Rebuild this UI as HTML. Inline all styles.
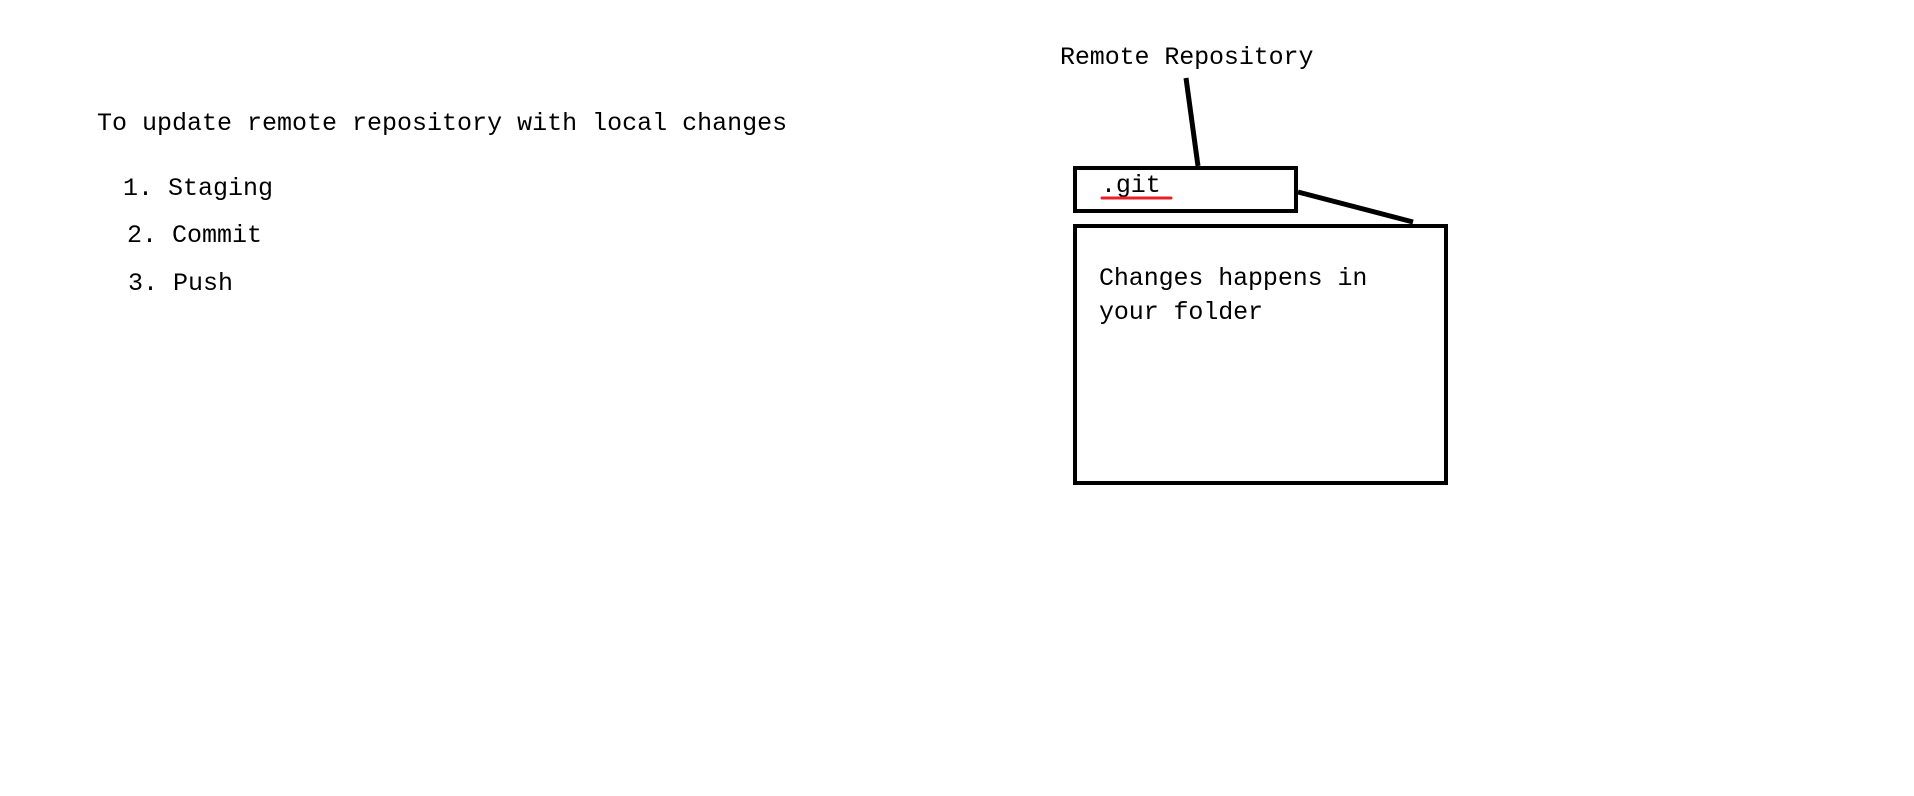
<!DOCTYPE html>
<html><head><style>
body{margin:0;width:1914px;height:796px;background:#fff;position:relative;overflow:hidden;font-family:"Liberation Mono",monospace;color:#000}
.t{position:absolute;white-space:pre;font-size:25px;line-height:24px}
</style></head><body>
<div class="t" style="left:97px;top:112px;">To update remote repository with local changes</div>
<div class="t" style="left:123px;top:177px;">1. Staging</div>
<div class="t" style="left:127px;top:224px;">2. Commit</div>
<div class="t" style="left:128px;top:272px;">3. Push</div>
<div class="t" style="left:1060px;top:46px;letter-spacing:-0.1px">Remote Repository</div>
<div class="t" style="left:1101px;top:174px;letter-spacing:-0.1px">.git</div>
<div class="t" style="left:1099px;top:267px;letter-spacing:-0.1px">Changes happens in</div>
<div class="t" style="left:1099px;top:301px;letter-spacing:-0.1px">your folder</div>
<svg width="1914" height="796" style="position:absolute;left:0;top:0">
<line x1="1186" y1="78" x2="1198" y2="166" stroke="#000" stroke-width="5"/>
<rect x="1075" y="168" width="221" height="43" fill="none" stroke="#000" stroke-width="4"/>
<line x1="1298" y1="192" x2="1413" y2="222" stroke="#000" stroke-width="5"/>
<rect x="1075" y="226" width="371" height="257" fill="none" stroke="#000" stroke-width="4"/>
<line x1="1102" y1="198" x2="1171" y2="198" stroke="#e8202a" stroke-width="3" stroke-linecap="round"/>
</svg>
</body></html>
